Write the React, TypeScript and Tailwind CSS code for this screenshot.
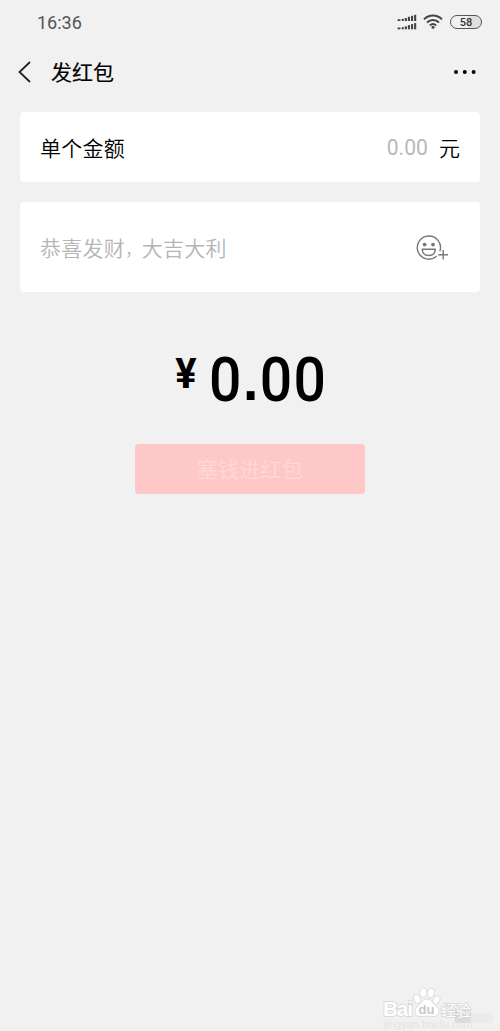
import { useState } from "react";

function SignalIcon() {
  const bars = [0, 1, 2, 3, 4, 5];
  const heights = [1.8, 2.2, 3, 4.2, 5.2, 6.2];
  return (
    <svg width="20" height="16" viewBox="0 0 20 16" fill="#444">
      {bars.map((i) => (
        <g key={i}>
          <rect x={i === 0 ? 0.6 : i * 3.1 + 1.6} y={7 - heights[i]} width={i === 0 ? 2.8 : 2.1} height={heights[i]} />
          <rect x={i === 0 ? 0.6 : i * 3.1 + 1.6} y={15.3 - heights[i]} width={i === 0 ? 2.8 : 2.1} height={heights[i]} />
        </g>
      ))}
    </svg>
  );
}

function WifiIcon() {
  return (
    <svg width="20" height="16" viewBox="0 0 20 16" fill="none" stroke="#444" strokeWidth="2">
      <path d="M1 5.4C6 .3 14 .3 19 5.4" />
      <path d="M4 8.5C7.4 5.2 12.6 5.2 16 8.5" />
      <path d="M6.9 11.4C8.7 9.7 11.3 9.7 13.1 11.4" />
      <circle cx="10" cy="13.2" r="1.5" fill="#444" stroke="none" />
    </svg>
  );
}

function EmojiAddIcon() {
  return (
    <svg width="34" height="28" viewBox="0 0 34 28" fill="none" stroke="#777" strokeWidth="1.4">
      <path d="M21.6 21.2A11.6 11.6 0 1 1 24.9 16.2" />
      <circle cx="9.6" cy="9.6" r="1.9" fill="#777" stroke="none" />
      <circle cx="18" cy="9.6" r="1.9" fill="#777" stroke="none" />
      <path d="M7.2 14.3H20.4C20.1 18.2 17.5 20.5 13.8 20.5S7.5 18.2 7.2 14.3Z" strokeLinejoin="round" />
      <path d="M23.3 19.8H33M28.2 15V24.6" />
    </svg>
  );
}

function StatusBar() {
  return (
    <div className="flex h-11 items-center justify-between pr-[18px] pl-[37px]">
      <span className="font-['Roboto',sans-serif] text-[18px] text-[#555]">16:36</span>
      <div className="flex items-center">
        <SignalIcon />
        <span className="ml-[6px]">
          <WifiIcon />
        </span>
        <span className="ml-[7px] flex h-[14px] w-8 items-center justify-center rounded-full border-[1.5px] border-[#555] bg-gradient-to-r from-[#f1f1f1] from-58% to-[#e0e0e0] to-58% font-['Roboto',sans-serif] text-[11px] leading-none font-medium text-[#333]">
          58
        </span>
      </div>
    </div>
  );
}

function Watermark() {
  return (
    <div className="absolute right-0 bottom-0 h-[46px] w-[120px] overflow-hidden">
      <svg width="120" height="46" viewBox="0 0 120 46" fill="#fff" stroke="#d6d6d6" strokeWidth="0.8">
        <rect x="75" y="25" width="16" height="13" fill="#dcdcdc" stroke="none" />
        <rect x="91" y="28" width="22" height="10" fill="#ebebeb" stroke="none" />
        <ellipse cx="37" cy="14" rx="3.3" ry="4.6" transform="rotate(-20 37 14)" />
        <ellipse cx="43.5" cy="7.5" rx="3.4" ry="4.8" />
        <ellipse cx="51" cy="8" rx="3.3" ry="4.6" transform="rotate(12 51 8)" />
        <ellipse cx="56.5" cy="15" rx="3.2" ry="4.4" transform="rotate(24 56.5 15)" />
        <path d="M47 14C42 14 41 19 37 22C33 26 35 32 41 31.5C45 31 49 31 53 31.5C59 32 61 26 57 22C53 19 52 14 47 14Z" />
        <g fontWeight="bold" strokeWidth="1.6" paintOrder="stroke">
          <text x="3" y="31" fontSize="21" textLength="30" fontFamily="Liberation Sans, sans-serif">
            Bai
          </text>
          <text x="38.500" y="29" fontSize="13" fill="#c8c8c8" stroke="none" fontFamily="Liberation Sans, sans-serif">
            du
          </text>
          <text x="61" y="30.5" fontSize="15" fontWeight="normal" fontFamily="Noto Sans CJK SC, sans-serif">
            经验
          </text>
        </g>
        <text x="4" y="43" fontSize="11" fill="#e4e4e4" stroke="none" fontFamily="Liberation Sans, sans-serif">
          jingyan.baidu.com
        </text>
      </svg>
    </div>
  );
}

export default function App() {
  const [amount] = useState(0);
  const [whole, cents] = amount.toFixed(2).split(".");

  return (
    <div className="relative h-[1031px] w-full overflow-hidden bg-[#f1f1f1] font-['Noto_Sans_CJK_SC',sans-serif]">
      <StatusBar />

      <header className="flex h-[55px] items-center justify-between pr-[23px] pl-[18px]">
        <div className="flex items-center">
          <svg width="13" height="22" viewBox="0 0 13 22" fill="none" stroke="#222" strokeWidth="1.8">
            <path d="M12 1L1.5 11L12 21" />
          </svg>
          <h1 className="ml-5 text-[21px] leading-none font-normal text-black [-webkit-text-stroke:0.15px_#000]">
            发红包
          </h1>
        </div>
        <svg width="24" height="6" viewBox="0 0 24 6" fill="#000">
          <circle cx="3" cy="3" r="2" />
          <circle cx="11.8" cy="3" r="2" />
          <circle cx="20.6" cy="3" r="2" />
        </svg>
      </header>

      <main className="flex flex-col items-center px-5 pt-[13.4px]">
        <div className="flex h-[70px] w-full items-center justify-between rounded-[4px] bg-white px-5">
          <span className="text-[21px] font-[350] tracking-[0.25px] text-black">单个金额</span>
          <div className="flex items-center">
            <span className="origin-right scale-x-96 font-['Roboto',sans-serif] text-[22px] text-[#b8b8b8]">0.00</span>
            <span className="ml-[11px] text-[21px] font-[350] text-black">元</span>
          </div>
        </div>

        <div className="mt-5 flex h-[90px] w-full items-center justify-between rounded-[4px] bg-white pr-[31px] pl-5">
          <span className="flex items-baseline text-[21px] font-[350] tracking-[0.25px] text-[#b5b5b5]">
            <span>恭喜发财</span>
            <span className="text-[16.5px]">，</span>
            <span>大吉大利</span>
          </span>
          <span className="pt-[3px]">
            <EmojiAddIcon />
          </span>
        </div>

        <div className="mt-[52px] flex h-[72px] items-start pl-3 text-black">
          <span className="mt-[9px] origin-right scale-x-95 font-['Roboto',sans-serif] text-[42px] leading-[42px] font-bold">¥</span>
          <span className="ml-3 flex origin-left scale-x-92 font-['Roboto',sans-serif] text-[62px] leading-[72px] font-medium tracking-[1.6px]">
            {whole}
            <span className="font-['Liberation_Sans',sans-serif] text-[60px] font-bold">.</span>
            {cents}
          </span>
        </div>

        <button
          disabled
          className="mt-[27.6px] h-[50px] w-[230px] rounded-[4px] bg-[#ffc8c8] text-[21px] font-[350] tracking-[0.25px] text-[#ffd8d8]"
        >
          塞钱进红包
        </button>
      </main>

      <Watermark />
    </div>
  );
}
